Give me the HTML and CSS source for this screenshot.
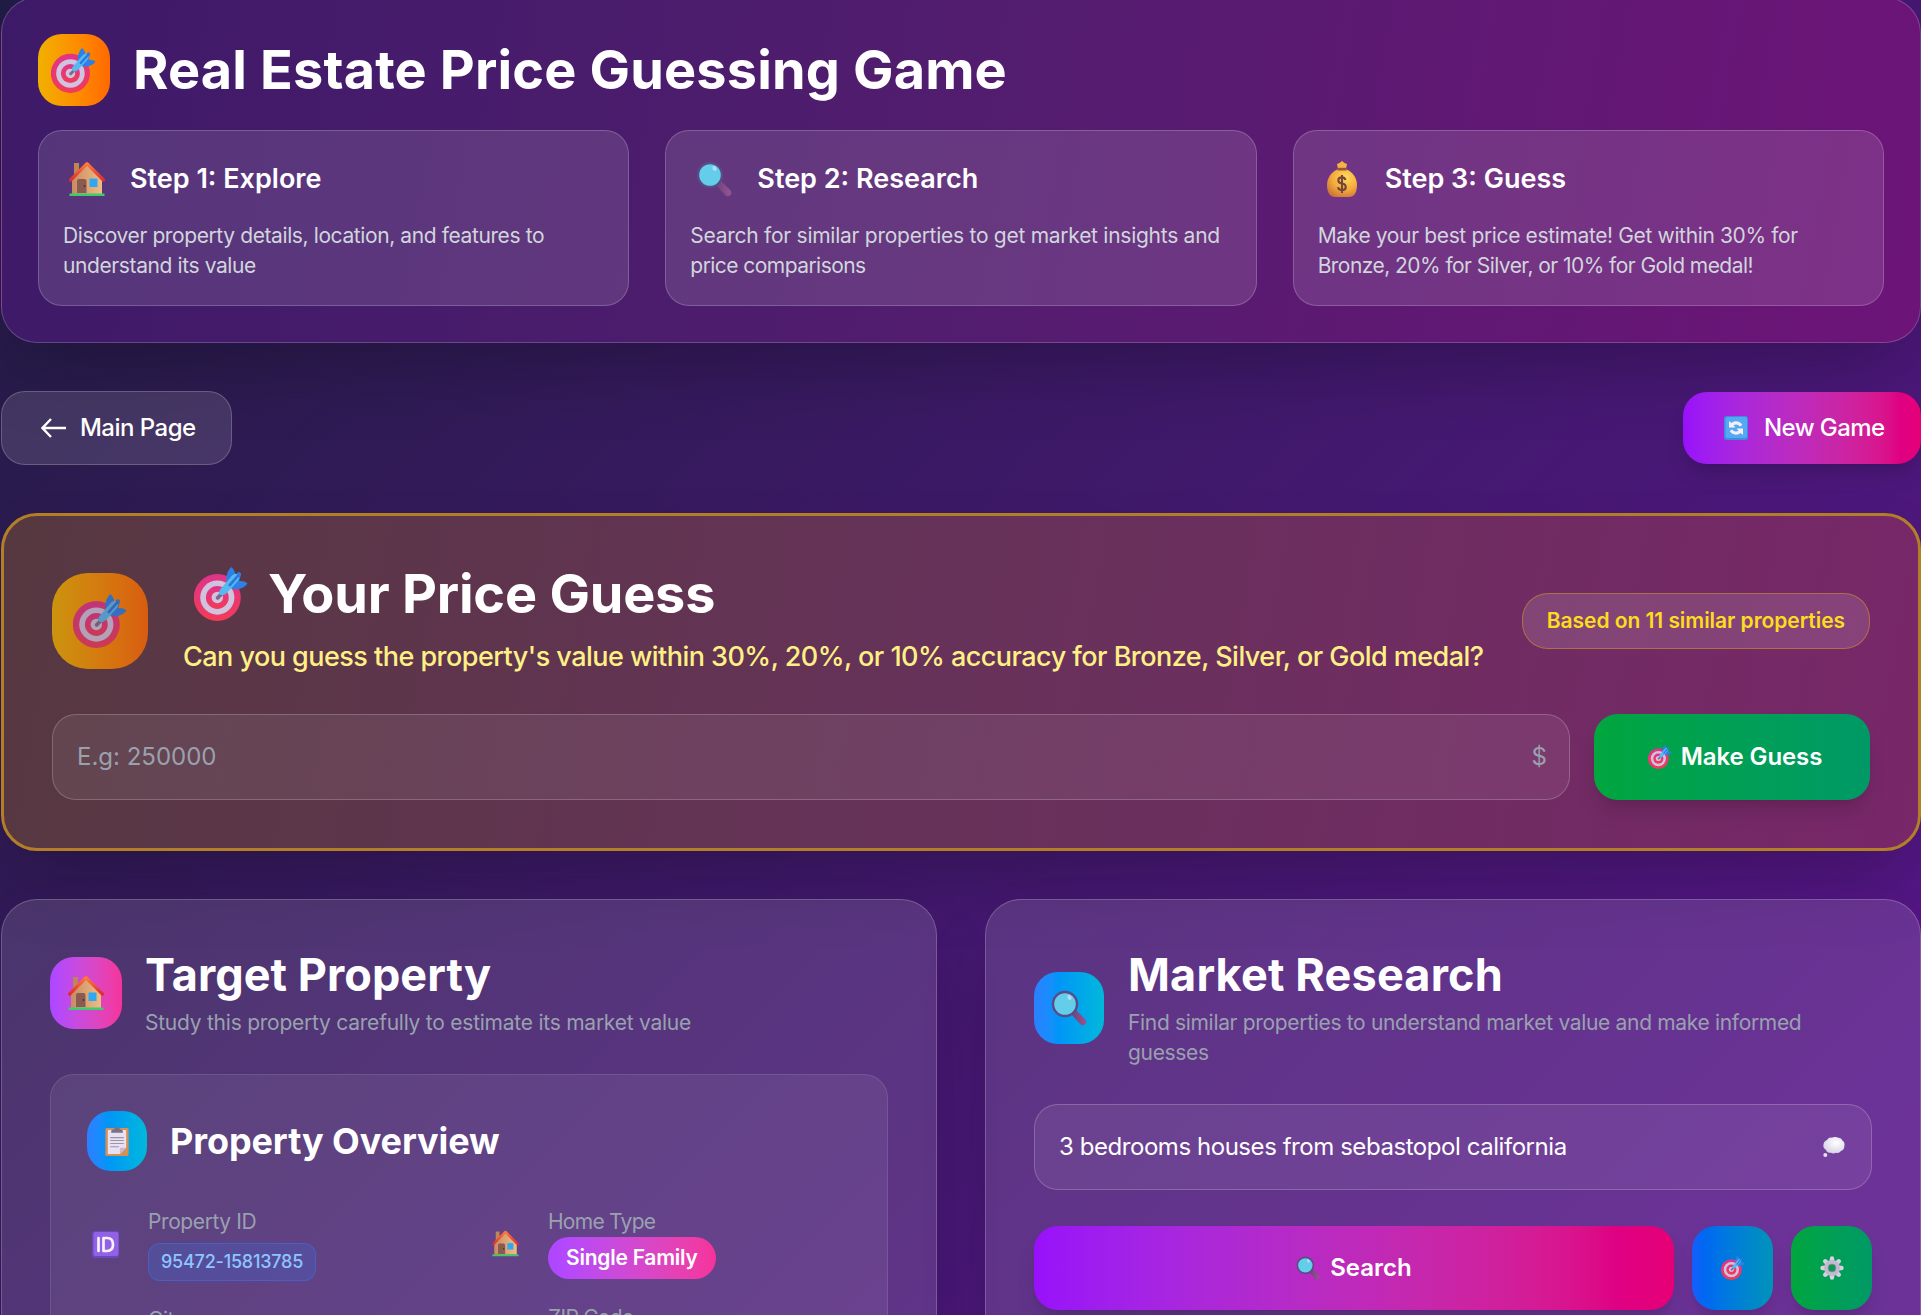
FILE: index.html
```
<!DOCTYPE html>
<html lang="en">
<head>
<meta charset="utf-8">
<title>Real Estate Price Guessing Game</title>
<link rel="stylesheet" href="styles.css">
</head>
<body>
<svg class="sprite" aria-hidden="true">
  <defs>
    <linearGradient id="g-red" x1="0" y1="0" x2="0" y2="1"><stop offset="0" stop-color="#e0348a"/><stop offset="1" stop-color="#f23b58"/></linearGradient>
    <linearGradient id="g-wall" x1="0" y1="0" x2="1" y2="0"><stop offset="0" stop-color="#c98b62"/><stop offset="1" stop-color="#efbd84"/></linearGradient>
    <linearGradient id="g-roof" x1="0" y1="0" x2="0" y2="1"><stop offset="0" stop-color="#ff7a3c"/><stop offset="1" stop-color="#dc2d2d"/></linearGradient>
    <linearGradient id="g-handle" x1="0" y1="0" x2="1" y2="0"><stop offset="0" stop-color="#6d4379"/><stop offset="1" stop-color="#985593"/></linearGradient>
    <radialGradient id="g-bag" cx=".62" cy=".3" r=".8"><stop offset="0" stop-color="#ffd95a"/><stop offset=".55" stop-color="#f5ab3c"/><stop offset="1" stop-color="#c9703a"/></radialGradient>
    <radialGradient id="g-cloud" cx=".6" cy=".35" r=".7"><stop offset="0" stop-color="#ffffff"/><stop offset="1" stop-color="#d6cfe6"/></radialGradient>
    <symbol id="target" viewBox="0 0 160 161">
      <circle cx="69" cy="91" r="70" fill="url(#g-red)"/>
      <circle cx="69" cy="91" r="51" fill="#cfc3df"/>
      <circle cx="69" cy="91" r="34" fill="url(#g-red)"/>
      <circle cx="69" cy="91" r="17" fill="#cfc3df"/>
      <path d="M70 92 86 76" stroke="#7d6c86" stroke-width="11" stroke-linecap="round"/>
      <path d="M98 52C93 30 98 12 111 0c6 5 11 14 12 24l8-8c6-2 11 3 8 9l-5 17c9-1 18 1 25 7-9 13-27 20-45 17z" fill="#2f80e6"/>
      <path d="M78 66 112 27c6-6 13-9 16-5l5 6c3 3 1 9-4 15L95 80c-14 10-27-1-17-14z" fill="#56baf2"/>
      <path d="M106 54 131 26" stroke="#2b77dc" stroke-width="8" stroke-linecap="round"/>
    </symbol>
    <symbol id="house" viewBox="0 0 36 36">
      <path d="M5 2h5v14H5z" fill="#bd8657"/>
      <path d="M3 16 18 3l15 13v17H3z" fill="url(#g-wall)"/>
      <path d="M1.6 19 18 2.6 34.4 19" fill="none" stroke="url(#g-roof)" stroke-width="3.2" stroke-linecap="round" stroke-linejoin="round"/>
      <path d="M8 32V20q0-2 2-2h5.500q2 0 2 2v12z" fill="#8a5b51"/>
      <circle cx="15.500" cy="25" r=".9" fill="#4c2c2c"/>
      <path d="M20.500 17.500h8V26h-8z" fill="#2fa8f3"/>
      <path d="M.5 32.500h35V35H.5z" fill="#3ecb6b"/>
    </symbol>
    <symbol id="glass" viewBox="0 0 36 36">
      <path d="M20.500 24.500q1-3.500 4.500-4.500l9.500 9.500q2 3-.5 5-2.500 1.800-5-.5z" fill="url(#g-handle)"/>
      <circle cx="14" cy="14" r="12" fill="#63cdea" stroke="#5a4a86" stroke-width="2.400"/>
      <ellipse cx="18.500" cy="7.500" rx="2" ry="2.600" fill="#b5dcf8" transform="rotate(-25 18.500 7.500)"/>
    </symbol>
    <symbol id="bag" viewBox="0 0 30 36">
      <path d="M11 8 10 3l2.500-1L15 0l2.500 2L20 3l-1 5z" fill="#f8b242"/>
      <path d="M11.500 8h7C26 11 30 17 30 24c0 8-3 12-8 12H8c-5 0-8-4-8-12C0 17 4 11 11.500 8z" fill="url(#g-bag)"/>
      <path d="M10.500 6.800h9v2.700h-9z" fill="#93583c"/>
      <path d="M18.500 19c-.5-2-2-2.600-3.600-2.600-4.800 0-4.800 5.300 0 6.100 5.300.9 5 6.600 0 6.600-2 0-3.500-.8-3.900-3M15 14v18" fill="none" stroke="#74473a" stroke-width="2.100"/>
    </symbol>
    <symbol id="refresh" viewBox="0 0 24 24">
      <rect width="24" height="24" rx="2.500" fill="#3f8be0"/>
      <rect x="1.500" y="1" width="21.500" height="21" rx="2" fill="#55a9f2"/>
      <path d="M5 5v6.500h6.500L9.500 9.300c2.200-1.500 5-.8 6.200 1.200l2.600-1.600C16 5 11 4.200 7.300 7z" fill="#f4effa"/>
      <path d="M19 19v-6.500h-6.500l2 2.200c-2.200 1.500-5 .8-6.200-1.200l-2.600 1.600C8 19 13 19.800 16.700 17z" fill="#f4effa"/>
    </symbol>
    <symbol id="clipboard" viewBox="0 0 24 30">
      <rect y="1" width="24" height="29" rx="1.500" fill="#d88f54"/>
      <path d="M2.500 3h19v18.500L15 28H2.500z" fill="#e9e1f2"/>
      <path d="M15 28v-5q0-1.500 1.500-1.500h5z" fill="#c7b8d6"/>
      <path d="M6 6V3.500L9 2q1-2 3-2t3 2l3 1.500V6z" fill="#77728a"/>
      <path d="M5 11h14M5 14h14M5 17h14M5 20.500h9" stroke="#9b93a8" stroke-width="1.100"/>
    </symbol>
    <symbol id="idbadge" viewBox="0 0 27 27">
      <rect width="27" height="27" rx="2.500" fill="#6b46bd"/>
      <rect x="1.500" y="1" width="25" height="24" rx="2" fill="#9262e6"/>
      <path d="M6.500 7v13M11.500 7v13h3.500q6 0 6-6.500T15 7z" fill="none" stroke="#f7f2fc" stroke-width="2.700" stroke-linecap="round" stroke-linejoin="round"/>
    </symbol>
    <symbol id="thought" viewBox="0 0 22 20">
      <path d="M4 3q2-3 5-2.300 3-1.500 6 0 3.500-.3 4.200 2.500Q22.500 5.500 21.300 9q.3 4-3.300 5-2 2.800-5 1.800-3 1.500-5 0-4 .3-5-2.800Q-.5 11 .5 7.500.8 4 4 3z" fill="url(#g-cloud)"/>
      <circle cx="2.300" cy="18" r="2" fill="#e6dff2"/>
    </symbol>
    <symbol id="gear" viewBox="0 0 24 24">
      <path d="M12 2.500v19M2.500 12h19M5.300 5.300l13.400 13.400M18.700 5.300 5.300 18.700" stroke="#d9d0e4" stroke-width="4.400" stroke-linecap="round"/>
      <circle cx="12" cy="12" r="8" fill="#c3b9d0"/>
      <circle cx="12" cy="12" r="3.900" fill="#00a04a" stroke="#8f86a2" stroke-width="1"/>
    </symbol>
  </defs>
</svg>

<main class="page">
  <header class="hero">
    <div class="hero-head">
      <span class="tile tile-gold"><svg class="e45"><use href="#target"/></svg></span>
      <h1>Real Estate Price Guessing Game</h1>
    </div>
    <div class="steps">
      <section class="step">
        <div class="step-head"><span class="step-icon"><svg class="e36"><use href="#house"/></svg></span><h3>Step 1: Explore</h3></div>
        <p class="t1">Discover property details, location, and features to<br>understand its value</p>
      </section>
      <section class="step">
        <div class="step-head"><span class="step-icon"><svg class="e36"><use href="#glass"/></svg></span><h3>Step 2: Research</h3></div>
        <p class="t2">Search for similar properties to get market insights and<br><span class="t4">price comparisons</span></p>
      </section>
      <section class="step">
        <div class="step-head"><span class="step-icon"><svg class="e36"><use href="#bag"/></svg></span><h3>Step 3: Guess</h3></div>
        <p class="t3">Make your best price estimate! Get within 30% for<br><span class="t4">Bronze, 20% for Silver, or 10% for Gold medal!</span></p>
      </section>
    </div>
  </header>

  <nav class="nav">
    <a class="btn-back"><svg class="arrow" viewBox="0 0 26 20"><path d="M25 10H1.500M10 1 1.500 10l8.500 9" fill="none" stroke="currentColor" stroke-width="2.400"/></svg>Main Page</a>
    <a class="btn-new"><svg class="e24"><use href="#refresh"/></svg>New Game</a>
  </nav>

  <section class="guess">
    <div class="guess-head">
      <span class="tile tile-pulse"><svg class="e54"><use href="#target"/></svg></span>
      <div class="guess-text">
        <h2><svg class="e54"><use href="#target"/></svg>Your Price Guess</h2>
        <p>Can you guess the property's value within 30%, 20%, or 10% accuracy for Bronze, Silver, or Gold medal?</p>
      </div>
      <span class="badge">Based on 11 similar properties</span>
    </div>
    <div class="guess-form">
      <div class="field"><span class="placeholder">E.g: 250000</span><span class="currency">$</span></div>
      <button class="btn-guess"><svg class="e24"><use href="#target"/></svg>Make Guess</button>
    </div>
  </section>

  <div class="columns">
    <section class="panel">
      <div class="panel-head">
        <span class="tile tile-pink"><svg class="e36"><use href="#house"/></svg></span>
        <div><h2>Target Property</h2><p class="study">Study this property carefully to estimate its market value</p></div>
      </div>
      <div class="overview">
        <div class="overview-head"><span class="tile tile-small"><svg class="e30"><use href="#clipboard"/></svg></span><h3>Property Overview</h3></div>
        <div class="facts">
          <div class="fact-col">
            <div class="fact"><span class="fact-icon"><svg class="e27"><use href="#idbadge"/></svg></span><div><span class="label">Property ID</span><span class="chip-id">95472-15813785</span></div></div>
            <div class="fact"><span class="fact-icon"></span><div><span class="label">City</span></div></div>
          </div>
          <div class="fact-col">
            <div class="fact"><span class="fact-icon"><svg class="e27"><use href="#house"/></svg></span><div><span class="label tight">Home Type</span><span class="chip-type">Single Family</span></div></div>
            <div class="fact"><span class="fact-icon"></span><div><span class="label tight">ZIP Code</span></div></div>
          </div>
        </div>
      </div>
    </section>

    <section class="panel">
      <div class="panel-head market">
        <span class="tile tile-blue"><svg class="e36"><use href="#glass"/></svg></span>
        <div><h2>Market Research</h2><p class="find">Find similar properties to understand market value and make informed<br>guesses</p></div>
      </div>
      <div class="field search-field"><span class="query">3 bedrooms houses from sebastopol california</span><svg class="thought"><use href="#thought"/></svg></div>
      <div class="actions">
        <button class="btn-search"><svg class="e24"><use href="#glass"/></svg>Search</button>
        <button class="btn-icon blue"><svg class="e24"><use href="#target"/></svg></button>
        <button class="btn-icon green"><svg class="e24"><use href="#gear"/></svg></button>
      </div>
    </section>
  </div>
</main>
</body>
</html>
```
FILE: styles.css
```
* { box-sizing: border-box; margin: 0; }
html { height: 1315px; overflow: hidden; }
body {
  height: 1315px;
  overflow: hidden;
  font-family: Inter, "Liberation Sans", sans-serif;
  font-size: 24px;
  line-height: 36px;
  color: #fff;
  background: linear-gradient(135deg, #211c45 0%, #2b1b4f 17%, #3f196a 50%, #58168a 94%);
}
svg { display: block; flex: none; }
.sprite { position: absolute; width: 0; height: 0; }
button { border: 0; font: inherit; color: inherit; }
.page { width: 1920px; margin: -3px 0 0 1px; display: flex; flex-direction: column; gap: 48px; }

.e24 { width: 24px; height: 24px; }
.e27 { width: 27px; height: 27px; }
.e30 { width: 24px; height: 29px; }
.e36 { width: 36px; height: 36px; }
.e45 { width: 45px; height: 45px; }
.e54 { width: 54px; height: 54px; }

.tile {
  display: flex; align-items: center; justify-content: center; flex: none;
  width: 72px; height: 72px; border-radius: 24px;
}
.tile-gold { background: linear-gradient(to right in oklab, oklch(79.5% .184 86.047), oklch(70.5% .213 47.604)); }
.tile-pink { background: linear-gradient(to right in oklab, oklch(62.7% .265 303.9), oklch(65.6% .241 354.308)); }
.tile-blue { width: 70px; }
.tile-blue, .tile-small { background: linear-gradient(to right in oklab, oklch(62.3% .214 259.815), oklch(71.5% .143 215.221)); }
.tile-small { width: 60px; height: 60px; }
.tile-pulse {
  width: 96px; height: 96px; border-radius: 36px; opacity: .76;
  background: linear-gradient(to right in oklab, oklch(79.5% .184 86.047), oklch(70.5% .213 47.604));
}

.hero {
  padding: 36px;
  border: 1px solid rgba(255, 255, 255, .2);
  border-radius: 36px;
  background: linear-gradient(100deg, #3d1a68 0%, #521d6f 50%, #6d1478 100%);
  box-shadow: 0 37px 75px -18px rgba(0, 0, 0, .25);
  display: flex; flex-direction: column; gap: 24px;
}
.hero-head { display: flex; align-items: center; gap: 23px; }
.hero-head svg { transform: translateX(-1px); }
.hero h1 { font-size: 54px; line-height: 60px; letter-spacing: .003em; }
.steps { display: grid; grid-template-columns: repeat(3, 1fr); gap: 36px; }
.step {
  height: 176px; padding: 24px;
  border: 1px solid rgba(255, 255, 255, .2);
  border-radius: 24px;
  background: rgba(255, 255, 255, .12);
}
.step-head { display: flex; align-items: center; gap: 19px; margin-bottom: 18px; }
.step-icon { width: 48px; height: 48px; display: flex; align-items: center; justify-content: center; }
.step h3 { font-size: 27px; font-weight: 600; line-height: 42px; }
.step p { font-size: 21px; line-height: 30px; color: #d1d5dc; white-space: nowrap; }
.t1 { letter-spacing: -.0188em; }
.t2 { letter-spacing: -.0125em; }
.t3 { letter-spacing: -.0171em; }
.t4 { letter-spacing: -.0263em; }

.nav { display: flex; align-items: center; justify-content: space-between; font-weight: 500; }
.btn-back {
  display: flex; align-items: center; gap: 13px;
  width: 231px; height: 74px; padding-left: 39px;
  border: 1px solid rgba(255, 255, 255, .2); border-radius: 24px;
  background: rgba(255, 255, 255, .12);
  letter-spacing: -.022em;
}
.arrow { width: 26px; height: 20px; }
.btn-new {
  display: flex; align-items: center; gap: 16px;
  width: 238px; height: 72px; padding-left: 41px;
  border-radius: 24px; letter-spacing: -.0245em;
}
.btn-new, .btn-search {
  background: linear-gradient(to right in oklab, oklch(55.8% .288 302.321), oklch(59.2% .249 .584));
  box-shadow: 0 15px 22px -4px rgba(0, 0, 0, .12), 0 6px 9px -6px rgba(0, 0, 0, .12);
}

.guess {
  padding: 48px;
  border: 3px solid #b37f26;
  border-radius: 36px;
  background: linear-gradient(100deg, #563840 0%, #67325a 50%, #782769 100%);
  box-shadow: 0 37px 75px -18px rgba(0, 0, 0, .25);
}
.guess-head { display: flex; align-items: center; height: 114px; margin-bottom: 36px; }
.guess-text { margin-left: 35px; flex: 1; white-space: nowrap; }
.guess-text h2 { display: flex; align-items: center; font-size: 54px; line-height: 60px; letter-spacing: -.004em; margin-bottom: 12px; }
.guess-text h2 svg { margin: 0 20px 0 11px; }
.guess-text p { font-size: 27px; font-weight: 500; line-height: 42px; letter-spacing: -.0197em; color: #fff085; }
.badge {
  flex: none; padding: 12px 24px; line-height: 30px;
  border: 1px solid rgba(240, 177, 0, .4); border-radius: 26px;
  background: rgba(255, 255, 255, .12);
  font-size: 21px; font-weight: 600; letter-spacing: -.0023em; color: #fddc20;
}
.guess-form { display: flex; gap: 24px; }
.field {
  flex: 1; height: 86px; padding: 0 22px 0 24px;
  display: flex; align-items: center; justify-content: space-between;
  border: 1px solid rgba(255, 255, 255, .2); border-radius: 24px;
  background: rgba(255, 255, 255, .07);
}
.placeholder, .currency { color: #99a1af; }
.btn-guess {
  width: 276px; height: 86px; border-radius: 24px;
  display: flex; align-items: center; justify-content: center; gap: 9px;
  padding: 0 0 0 6px;
  font-weight: 600; letter-spacing: -.0045em;
  background: linear-gradient(to right in oklab, oklch(62.7% .194 149.214), oklch(59.6% .145 163.225));
  box-shadow: 0 15px 22px -4px rgba(0, 0, 0, .12), 0 6px 9px -6px rgba(0, 0, 0, .12);
}

.columns { display: grid; grid-template-columns: 1fr 1fr; gap: 48px; }
.panel {
  height: 700px; padding: 48px;
  border: 1px solid rgba(255, 255, 255, .2); border-radius: 36px;
  background: rgba(255, 255, 255, .12);
  box-shadow: 0 37px 75px -18px rgba(0, 0, 0, .25);
}
.panel-head { display: flex; align-items: center; gap: 23px; margin-bottom: 36px; white-space: nowrap; }
.market { gap: 24px; }
.panel-head h2 { font-size: 45px; line-height: 54px; letter-spacing: .001em; margin-bottom: 6px; }
.market h2 { letter-spacing: .004em; }
.panel-head p { font-size: 21px; line-height: 30px; color: #99a1af; }
.study { letter-spacing: -.0115em; }
.find { letter-spacing: -.0155em; }

.overview {
  height: 500px; padding: 36px;
  border: 1px solid rgba(255, 255, 255, .1); border-radius: 24px;
  background: rgba(255, 255, 255, .07);
}
.overview-head { display: flex; align-items: center; gap: 23px; margin-bottom: 36px; }
.overview-head h3 { font-size: 36px; line-height: 48px; letter-spacing: -.0025em; }
.facts { display: grid; grid-template-columns: 1fr 1fr; gap: 36px; }
.fact-col { display: flex; flex-direction: column; gap: 24px; }
.fact { display: flex; align-items: center; gap: 25px; }
.fact-icon { width: 36px; display: flex; justify-content: center; }
.fact > div { display: flex; flex-direction: column; align-items: flex-start; }
.label { font-size: 21px; line-height: 30px; letter-spacing: -.0192em; color: #99a1af; }
.tight { letter-spacing: -.035em; }
.chip-id {
  margin-top: 6px; padding: 6px 12px; line-height: 24px;
  border: 1px solid rgba(43, 127, 255, .4); border-radius: 12px;
  background: rgba(43, 127, 255, .2);
  font-size: 18px; font-weight: 500; letter-spacing: -.0122em; color: #8ec5ff;
}
.chip-type {
  padding: 6px 18px; line-height: 30px; border-radius: 21px;
  background: linear-gradient(to right in oklab, oklch(62.7% .265 303.9), oklch(65.6% .241 354.308));
  font-size: 21px; font-weight: 600; letter-spacing: -.0115em;
}

.search-field { margin-bottom: 36px; padding-right: 26px; }
.query { letter-spacing: -.0185em; }
.thought { width: 22px; height: 20px; }
.actions { display: flex; gap: 18px; }
.btn-search {
  flex: 1; height: 84px; border-radius: 24px;
  display: flex; align-items: center; justify-content: center; gap: 10px;
  font-weight: 600;
}
.btn-icon {
  width: 81px; height: 84px; border-radius: 24px; padding: 0;
  display: flex; align-items: center; justify-content: center;
  box-shadow: 0 15px 22px -4px rgba(0, 0, 0, .12), 0 6px 9px -6px rgba(0, 0, 0, .12);
}
.blue { background: linear-gradient(to right in oklab, oklch(54.6% .245 262.881), oklch(60.9% .126 221.723)); }
.green { background: linear-gradient(to right in oklab, oklch(62.7% .194 149.214), oklch(59.6% .145 163.225)); }
```
